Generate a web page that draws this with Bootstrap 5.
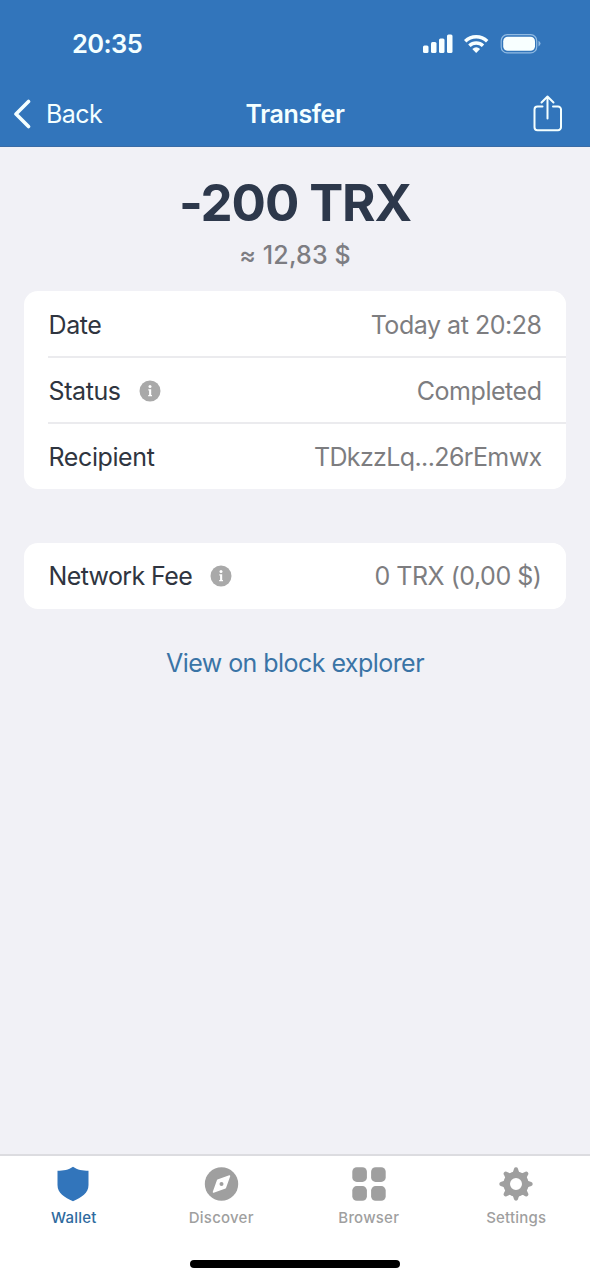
<!DOCTYPE html>
<html lang="en">
<head>
<meta charset="utf-8">
<meta name="viewport" content="width=device-width, initial-scale=1">
<title>Transfer</title>
<link href="https://cdn.jsdelivr.net/npm/bootstrap@5.3.0/dist/css/bootstrap.min.css" rel="stylesheet">
<style>
  body { font-family: Inter, "Liberation Sans", sans-serif; font-size: 25px; line-height: 30px; background: #f1f1f6; color: #2f3540; }
  .screen { height: 1280px; overflow: hidden; }
  .top-area { background: #3275bb; color: #f4ffff; height: 147px; border-bottom: 1px solid #3a6ca6; }
  .status-row { height: 88px; padding: 0 49px 0 72px; }
  .clock { font-size: 25.5px; font-weight: 600; letter-spacing: -.6px; }
  .title-row { height: 52px; padding: 0 27px; }
  .title-row > * { flex: 1 1 0; }
  .page-title { font-weight: 600; letter-spacing: -.35px; text-align: center; }
  .back-link { color: inherit; letter-spacing: -.6px; }
  .back-link svg { margin: 0 14px 0 -14px; }
  .amount { font-size: 51px; line-height: 60px; font-weight: 700; color: #2d384b; margin: 26px 0 7px; letter-spacing: -1.1px; }
  .fiat { color: #7d7d82; font-weight: 500; letter-spacing: .15px; }
  .panel { margin: 0 24px; border: 0; border-radius: 14px; overflow: hidden; background: #fff; }
  .line { height: 66px; margin-left: 24px; padding: 0 24.5px 0 .5px; border: 0; border-radius: 0; background: #fff; color: inherit; letter-spacing: -.4px; }
  .line + .line { border-top: 2px solid #ebebee; }
  .line.first-line { height: 65px; padding-top: 2px; }
  .line.mid-line { padding-top: 1px; }
  .line.last-line { height: 67px; }
  .val { color: #7d7d80; letter-spacing: -.47px; }
  .info { margin-left: 18px; }
  .explorer { color: #3a74a6; text-decoration: none; margin-top: 39px; letter-spacing: -.55px; }
  .tab-area { background: #fff; border-top: 2px solid #dcdce0; height: 126px; }
  .tab { font-size: 15px; line-height: 20px; font-weight: 500; letter-spacing: .22px; color: #9f9f9f; padding: 10px 0 0; gap: 6px; }
  .tab.current { color: #2e6a9e; }
  .home-bar { width: 210px; height: 8px; border-radius: 4px; background: #000; margin-bottom: 12px; }
</style>
</head>
<body>
<div class="screen d-flex flex-column">
  <header class="top-area flex-shrink-0">
    <div class="status-row d-flex align-items-center justify-content-between">
      <span class="clock">20:35</span>
      <svg width="118" height="22" viewBox="0 0 118 22" fill="#f8ffff">
        <rect x="0" y="12.500" width="5.500" height="7.500" rx="1.500"/><rect x="8" y="9" width="5.500" height="11" rx="1.500"/><rect x="16" y="5.500" width="5.500" height="14.500" rx="1.500"/><rect x="24" y="1.500" width="5.500" height="18.500" rx="1.500"/>
        <g fill="none" stroke="#f8ffff" stroke-width="3.400"><path d="M42.200 8.200a15.700 15.700 0 0 1 22 0"/><path d="M46.400 12.800a9.700 9.700 0 0 1 13.600 0"/></g>
        <path d="M49.300 16q3.900-3.300 7.800 0l-3.900 4.100z"/>
        <rect x="78.200" y="1.700" width="35.500" height="18.200" rx="6" fill="none" stroke="#91bbe3" stroke-width="1.200"/>
        <rect x="80.200" y="3.700" width="31.800" height="14" rx="4.500"/><path d="M115.500 7.800q2 1 2 2.800t-2 2.800z" fill="#91bbe3"/>
      </svg>
    </div>
    <nav class="title-row d-flex align-items-center">
      <a class="back-link d-flex align-items-center text-decoration-none" href="#">
        <svg width="19" height="30" viewBox="0 0 19 30" fill="none" stroke="#f4ffff" stroke-width="3.600" stroke-linecap="round" stroke-linejoin="round"><path d="M15.500 2.500L3 15l12.500 12.500"/></svg><span class="back-text">Back</span>
      </a>
      <span class="page-title">Transfer</span>
      <span class="d-flex justify-content-end">
        <svg width="30" height="38" viewBox="0 0 30 38" fill="none" stroke="#f4ffff" stroke-width="2" stroke-linecap="round" stroke-linejoin="round"><path d="M9.500 11.500H4.500a3 3 0 0 0-3 3v17.700a3 3 0 0 0 3 3h20.500a3 3 0 0 0 3-3V14.500a3 3 0 0 0-3-3h-5M14.500 23.500V1.500M8.500 7.500l6-6 6 6"/></svg>
      </span>
    </nav>
  </header>
  <main class="flex-grow-1 d-flex flex-column">
    <h1 class="amount text-center"><span>-200 TRX</span></h1>
    <div class="fiat text-center"><span>≈ 12,83 $</span></div>
    <div class="panel list-group" style="margin-top:21px">
      <div class="line first-line list-group-item d-flex align-items-center"><span>Date</span><span class="val ms-auto">Today at 20:28</span></div>
      <div class="line mid-line list-group-item d-flex align-items-center"><span>Status</span>
        <svg class="info" width="22" height="22" viewBox="0 0 22 22"><circle cx="11" cy="11" r="10.500" fill="#a9a9a9"/><g fill="#fff"><circle cx="11" cy="6.400" r="1.500"/><path d="M9.300 9.300h2.900v5.800h.8v1.200H9.200v-1.200h.9v-4.600h-.8z"/></g></svg>
        <span class="val ms-auto">Completed</span></div>
      <div class="line last-line list-group-item d-flex align-items-center"><span>Recipient</span><span class="val ms-auto" style="letter-spacing:-.62px">TDkzzLq...26rEmwx</span></div>
    </div>
    <div class="panel list-group" style="margin-top:54px">
      <div class="line list-group-item d-flex align-items-center"><span style="letter-spacing:-.62px">Network Fee</span>
        <svg class="info" width="22" height="22" viewBox="0 0 22 22"><circle cx="11" cy="11" r="10.500" fill="#a9a9a9"/><g fill="#fff"><circle cx="11" cy="6.400" r="1.500"/><path d="M9.300 9.300h2.900v5.800h.8v1.200H9.200v-1.200h.9v-4.600h-.8z"/></g></svg>
        <span class="val ms-auto">0 TRX (0,00 $)</span></div>
    </div>
    <a class="explorer align-self-center" href="#">View on block explorer</a>
  </main>
  <footer class="tab-area d-flex flex-column justify-content-between align-items-center flex-shrink-0">
    <div class="row g-0 w-100">
      <div class="tab current col-3 d-flex flex-column align-items-center"><svg width="36" height="36" viewBox="0 0 36 36"><path d="M17 .8c4.500 3.300 9.500 3.800 15.500 4v14.300c0 8.200-7 12.400-15.500 16.100C8.500 31.500 1.500 27.300 1.500 19.100V4.800C7.500 4.600 12.500 4.100 17 .8z" fill="#3275bb"/></svg><span>Wallet</span></div>
      <div class="tab col-3 d-flex flex-column align-items-center"><svg width="36" height="36" viewBox="0 0 36 36"><circle cx="18.500" cy="18" r="16.700" fill="#9f9f9f"/><path d="M26.500 10l-4.200 11.800L10.500 26l4.200-11.800z" fill="#fff" stroke="#fff" stroke-width="1.500" stroke-linejoin="round"/><circle cx="18.500" cy="18" r="2" fill="#9f9f9f"/></svg><span>Discover</span></div>
      <div class="tab col-3 d-flex flex-column align-items-center"><svg width="36" height="36" viewBox="0 0 36 36" fill="#9f9f9f"><rect x="1.300" y="1.300" width="14.600" height="14.600" rx="4.500"/><rect x="20.100" y="1.300" width="14.600" height="14.600" rx="4.500"/><rect x="1.300" y="20.100" width="14.600" height="14.600" rx="4.500"/><rect x="20.100" y="20.100" width="14.600" height="14.600" rx="4.500"/></svg><span>Browser</span></div>
      <div class="tab col-3 d-flex flex-column align-items-center"><svg width="36" height="36" viewBox="0 0 36 36" fill="#9f9f9f"><defs><path id="tooth" d="M12.700 8C15 7 15.400 4.500 16 2.700Q16.500 1.300 18 1.300T20 2.700C20.600 4.500 21 7 23.300 8z"/></defs><path fill-rule="evenodd" d="M18 5.400a12.600 12.600 0 1 0 0 25.200 12.600 12.600 0 0 0 0-25.200zm0 6.600a6 6 0 1 1 0 12 6 6 0 0 1 0-12z"/><use href="#tooth"/><use href="#tooth" transform="rotate(45 18 18)"/><use href="#tooth" transform="rotate(90 18 18)"/><use href="#tooth" transform="rotate(135 18 18)"/><use href="#tooth" transform="rotate(180 18 18)"/><use href="#tooth" transform="rotate(225 18 18)"/><use href="#tooth" transform="rotate(270 18 18)"/><use href="#tooth" transform="rotate(315 18 18)"/></svg><span>Settings</span></div>
    </div>
    <div class="home-bar"></div>
  </footer>
</div>
<script src="https://cdn.jsdelivr.net/npm/bootstrap@5.3.0/dist/js/bootstrap.bundle.min.js"></script>
</body>
</html>
